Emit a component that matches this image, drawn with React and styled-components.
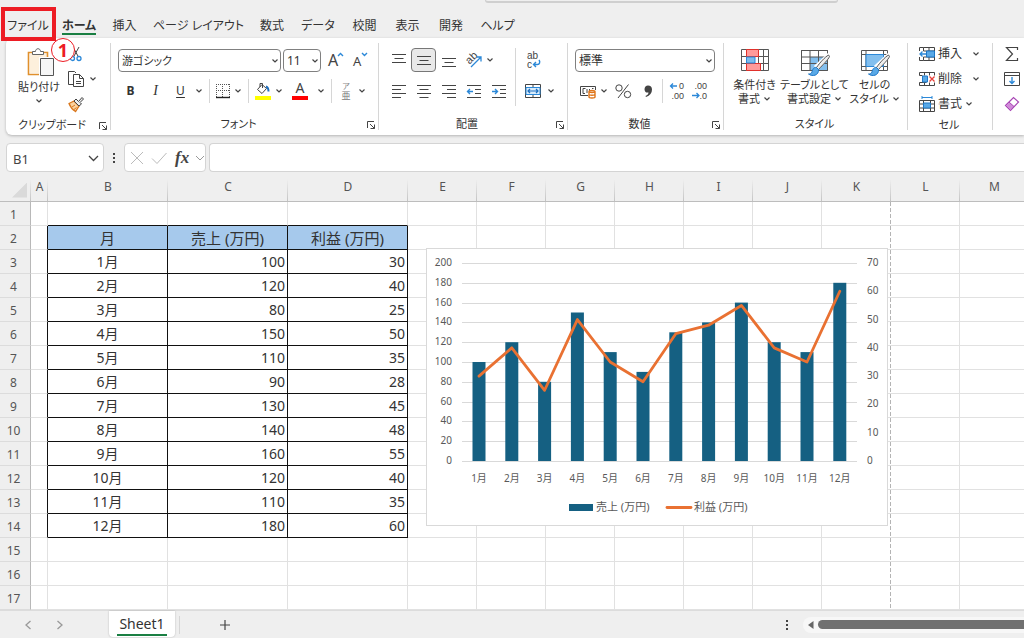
import React from "react";
import styled, { createGlobalStyle, css } from "styled-components";

const ui = `"Noto Sans", "Noto Sans CJK JP", sans-serif`;

const GlobalStyle = createGlobalStyle`
  *, *::before, *::after { box-sizing: border-box; }
  body { margin: 0; background: #efefef; color: #333; font-family: ${ui}; overflow-x: hidden; }
  button, input, select { font: inherit; color: inherit; }
`;

/* ---------- frame ---------- */

const Page = styled.div`
  display: flex;
  flex-direction: column;
  min-height: 100vh;
  overflow: hidden;
`;

const TopStrip = styled.header`
  position: relative;
  height: 38px;
  display: flex;
  flex-direction: column;
  justify-content: space-between;
`;

const SearchEdge = styled.div`
  width: 353px;
  height: 3px;
  margin-left: 485px;
  border: 1px solid #cfcfcf;
  border-width: 0 1px 2px;
  border-radius: 0 0 4px 4px;
`;

const Tabs = styled.nav`
  display: flex;
  padding: 0 0 2px 3px;
`;

const Tab = styled.button`
  flex: none;
  display: flex;
  justify-content: center;
  width: ${(p) => p.$w}px;
  height: 22px;
  padding: 0;
  border: 0;
  background: none;
  white-space: nowrap;
  font-size: 12px;
  line-height: 24px;
  font-feature-settings: "palt";
  font-weight: ${(p) => (p.$active ? 700 : 400)};

  span { height: 21px; border-bottom: 2px solid ${(p) => (p.$active ? "#1a7f43" : "transparent")}; }
`;

const FileMark = styled.div`
  position: absolute;
  z-index: 2;
  left: 1px;
  top: 7px;
  width: 55px;
  height: 34px;
  border: 4px solid #ed1c24;
`;

const StepBadge = styled.div`
  position: absolute;
  z-index: 2;
  left: 51px;
  top: 38px;
  width: 24px;
  height: 24px;
  border: 1px solid #ed1c24;
  border-radius: 50%;
  background: #fff;
  color: #ed1c24;
  font-weight: 700;
  font-size: 18px;
  line-height: 22px;
  text-align: center;
`;

/* ---------- ribbon ---------- */

const Ribbon = styled.section`
  display: flex;
  height: 97px;
  margin-left: 6px;
  background: #fff;
  border-radius: 6px 0 0 6px;
  box-shadow: 0 1px 3px rgba(0, 0, 0, 0.25);
`;

const GroupLine = styled.div`
  flex: none;
  width: 1px;
  margin: 5px 0;
  background: #d6d6d6;
`;

const Group = styled.div`
  flex: none;
  display: flex;
  flex-direction: column;
  width: ${(p) => p.$w}px;
`;

const GroupBody = styled.div`
  flex: 1;
  display: flex;
  padding: ${(p) => p.$pad || "10px 0 0 6px"};
`;

const GroupFoot = styled.div`
  display: flex;
  align-items: center;
  height: 20px;
  padding-right: 2px;
  font-size: 11px;
  line-height: 18px;
  text-align: center;
  white-space: nowrap;
  font-feature-settings: "palt";

  span { flex: 1; height: 20px; }
`;

const Stack = styled.div`
  flex: none;
  display: flex;
  flex-direction: column;
  gap: ${(p) => p.$gap || 0}px;
`;

const Row = styled.div`
  display: flex;
  align-items: center;
  height: ${(p) => p.$h || 24}px;
`;

const Tool = styled.button`
  flex: none;
  display: flex;
  align-items: center;
  justify-content: center;
  width: ${(p) => p.$w || 25}px;
  height: 24px;
  padding: 0;
  border: 0;
  background: none;
  font-size: 12px;
  line-height: 20px;
  ${(p) => p.$bold && css`font-weight: 700;`}
  ${(p) => p.$italic && css`font-family: "Liberation Serif", serif; font-style: italic; font-size: 14px;`}
  ${(p) => p.$underline && css`text-decoration: underline; text-underline-offset: 2px;`}
  ${(p) => p.$on && css`border: 1px solid #777; border-radius: 4px; background: #e9e9e9;`}
`;

const Sep = styled.span`
  flex: none;
  width: 1px;
  height: ${(p) => p.$h || 24}px;
  margin: 0 4px;
  background: #d6d6d6;
`;

const BigTool = styled.button`
  flex: none;
  display: flex;
  flex-direction: column;
  align-items: center;
  width: ${(p) => p.$w}px;
  padding: 0;
  border: 0;
  background: none;
  font-size: 11px;
  line-height: 14px;
  white-space: nowrap;
  font-feature-settings: "palt";

  > svg { margin-bottom: ${(p) => p.$iconGap || 2}px; }
  > span + svg { margin-top: 3px; }
`;

const WithChevron = styled.span`
  display: flex;
  align-items: center;
  gap: 3px;
`;

const CellTool = styled.button`
  display: flex;
  align-items: center;
  gap: 3px;
  height: 25px;
  padding: 0;
  border: 0;
  background: none;
  font-size: 12px;
  line-height: 20px;
  white-space: nowrap;

  > svg:last-child { margin-left: ${(p) => (p.$far ? 5 : 0)}px; }
`;

const Pick = styled.label`
  position: relative;
  flex: none;
  display: block;
  width: ${(p) => p.$w}px;
  height: 23px;
  margin-right: 2px;

  select {
    appearance: none;
    display: block;
    width: 100%;
    height: 23px;
    padding: 0 14px 0 3px;
    border: 1px solid #808080;
    border-radius: 4px;
    background: #fff;
    font-size: ${(p) => p.$size || 12}px;
    font-feature-settings: "palt";
  }
  svg { position: absolute; right: 2px; top: 8px; pointer-events: none; }
`;

/* ---------- formula bar ---------- */

const FormulaBar = styled.section`
  display: flex;
  height: 29px;
  margin: 8px 0 0 6px;
`;

const Field = styled.div`
  flex: ${(p) => (p.$w ? "none" : "1")};
  display: flex;
  align-items: center;
  width: ${(p) => (p.$w ? p.$w + "px" : "auto")};
  border: 1px solid #d4d4d4;
  border-right-width: ${(p) => (p.$w ? "1px" : 0)};
  border-radius: ${(p) => (p.$w ? "4px" : "4px 0 0 4px")};
  background: #fff;

  input {
    flex: 1;
    min-width: 0;
    height: 24px;
    padding: 3px 6px 0;
    border: 0;
    background: none;
    outline: 0;
    font-size: 13px;
    color: #444;
  }
`;

const BarDots = styled.div`
  flex: none;
  display: flex;
  align-items: center;
  justify-content: center;
  width: 20px;
`;

/* ---------- sheet ---------- */

const SheetArea = styled.main`
  position: relative;
  overflow: hidden;
`;

const Grid = styled.table`
  width: 1029px;
  min-width: 100%;
  table-layout: fixed;
  border-collapse: separate;
  border-spacing: 0;
  background: #fff;
`;

const ColHead = styled.th`
  height: 30px;
  padding: 0;
  border-bottom: 1px solid #bdbdbd;
  background: linear-gradient(to bottom, transparent 25%, #c4c4c4) right / 1px 100% no-repeat #efefef;
  font-size: 12px;
  font-weight: 400;
  line-height: 16px;
  color: #555;
`;

const Corner = styled.button`
  display: block;
  width: 15px;
  height: 15px;
  margin: 7px 0 0 12px;
  padding: 0;
  border: 0;
  background: #dadada;
  clip-path: polygon(100% 0, 100% 100%, 0 100%);
`;

const RowHead = styled.th`
  height: 24px;
  padding: 2px 3px 0 0;
  border-right: 1px solid #b8b8b8;
  border-bottom: 1px solid #dcdcdc;
  background: #efefef;
  font-size: 12px;
  font-weight: 400;
  line-height: 18px;
  color: #555;
`;

const Cell = styled.td`
  height: 24px;
  padding: 0 2px;
  border: solid #e1e1e1;
  border-width: 0 1px 1px 0;
  font-size: 14px;
  line-height: 20px;
  color: #333;
  text-align: ${(p) => p.$align || "center"};
  ${(p) => p.$head && css`background: #a6c9ec; font-size: 15px;`}
  ${(p) => p.$inkRight && css`border-right-color: #111;`}
  ${(p) => p.$inkBottom && css`border-bottom-color: #111;`}
  ${(p) =>
    p.$pageBreak &&
    css`
      border-right: 0;
      background: repeating-linear-gradient(to bottom, #b4b4b4 0 4px, #fff 4px 6px) right / 1px 100% no-repeat;
    `}
`;

const ChartFrame = styled.figure`
  position: absolute;
  left: 426px;
  top: 76px;
  width: 462px;
  height: 278px;
  margin: 0;
  border: 1px solid #d9d9d9;
  background: #fff;

  svg { display: block; }
  text { font-family: ${ui}; font-size: 10px; fill: #595959; }
  .legend { font-size: 11px; }
`;

/* ---------- bottom bar ---------- */

const BottomBar = styled.footer`
  display: flex;
  align-items: center;
  height: 28px;
  border-top: 1px solid #dcdcdc;
`;

const NavButton = styled.button`
  flex: none;
  display: flex;
  align-items: center;
  justify-content: center;
  width: 32px;
  height: 24px;
  padding: 0;
  border: 0;
  background: none;
`;

const SheetTab = styled.button`
  flex: none;
  width: 66px;
  height: 26px;
  margin-left: 33px;
  align-self: flex-start;
  padding: 1px 8px 0;
  border: 0;
  border-radius: 0 0 4px 4px;
  background: #fff;
  box-shadow: 0 0 2px rgba(0, 0, 0, 0.25);
  font-size: 14px;
  line-height: 20px;

  span { display: block; height: 22px; border-bottom: 2px solid #1a7f43; }
`;

const ScrollTrack = styled.div`
  flex: 1;
  display: flex;
  align-items: center;
  gap: 4px;
  height: 16px;
  padding-left: 4px;
  border-radius: 8px 0 0 8px;
  background: #f7f7f7;
`;

const ScrollThumb = styled.div`
  flex: 1;
  height: 9px;
  border-radius: 5px 0 0 5px;
  background: #707070;
`;

const Fill = styled.div`
  flex: 0 1 ${(p) => p.$w}px;
`;

/* ---------- icons ---------- */

const Icon = styled.svg`
  flex: none;
  display: block;
  overflow: visible;
  fill: none;
  stroke: #444;
  stroke-width: 1;
  text { stroke: none; fill: #444; font-family: "Liberation Sans", "Noto Sans CJK JP", sans-serif; }
`;

const Svg = ({ w = 16, h = 16, children, ...rest }) => (
  <Icon width={w} height={h} viewBox={`0 0 ${w} ${h}`} aria-hidden="true" {...rest}>
    {children}
  </Icon>
);

const Chevron = ({ w = 12 }) => (
  <Svg w={w} h={8}>
    <path d={`M${w / 2 - 2.5} 2.5 L${w / 2} 5 L${w / 2 + 2.5} 2.5`} strokeWidth="1.2" />
  </Svg>
);

const Launcher = () => (
  <Svg w={10} h={10}>
    <path d="M1.500 8V1.500H8M4 4l4.500 4.500M8.500 4.500v4h-4" />
  </Svg>
);

const Dots = () => (
  <Svg w={4} h={12}>
    <path d="M1 1h2v2H1zM1 5h2v2H1zM1 9h2v2H1z" fill="#444" stroke="none" />
  </Svg>
);

const PasteIcon = () => (
  <Svg w={32} h={30}>
    <g transform="translate(4 0)">
      <path d="M7 5.500H1.500V27.500H12" stroke="#e0902c" strokeWidth="1.600" />
      <path d="M3 7H20V10H12V26H3z" fill="#fdf0dc" stroke="none" />
      <path d="M15 5.500H20.500V10" stroke="#e0902c" strokeWidth="1.600" />
      <path d="M5.500 7.500V4.500H8.500C8.500 .8 13.500 .8 13.500 4.500H16.500V7.500z" fill="#fff" stroke="#666" />
      <path d="M13.500 11.500H26.500V28.500H13.500z" fill="#f6f6f6" stroke="#555" />
    </g>
  </Svg>
);

const CutIcon = () => (
  <Svg>
    <path d="M5 1l5.500 10M11 1L5.500 11" />
    <circle cx="4.500" cy="12.500" r="2" stroke="#2b88d8" strokeWidth="1.300" />
    <circle cx="11" cy="12.500" r="2" stroke="#2b88d8" strokeWidth="1.300" />
  </Svg>
);

const CopyIcon = () => (
  <Svg>
    <path d="M5 13.500H.5V.5H6.500L8 2" />
    <path d="M5.500 3.500H11.500L15.500 7.500V15.500H5.500zM11.500 3.500V7.500H15.500M8 10.500h5M8 12.500h5" />
  </Svg>
);

const BrushIcon = () => (
  <Svg>
    <path d="M1 7.500L6 5l5 5-3.500 5.500C5 14 2.500 11.500 1 7.500z" fill="#fbd3a0" stroke="#d9771d" strokeWidth="1.300" />
    <path d="M4 11l3-2M6 13.500l2.500-2" stroke="#d9771d" />
    <path d="M6 5l2-2 2.500 2.500L14 1.500l1.500 1.500L12 6.500l1.500 1.500-2.500 2z" fill="#eee" />
  </Svg>
);

const GrowFont = ({ down }) => (
  <Svg w={18} h={18}>
    <text x="1" y="15" fontSize={down ? 13 : 16} style={{ fontFamily: "Noto Sans, sans-serif" }}>A</text>
    <path d={down ? "M10 2l2.500 2.500L15 2" : "M11 5l2.500-2.500L16 5"} stroke="#2b88d8" strokeWidth="1.400" />
  </Svg>
);

const BordersIcon = () => (
  <Svg>
    <path d="M1.500 1v13M7.500 1v13M14.500 1v13M1 1.500h14M1 7.500h14" strokeDasharray="1 1" stroke="#555" />
    <path d="M1 14.500h14" stroke="#222" strokeWidth="1.400" />
  </Svg>
);

const FillIcon = () => (
  <Svg w={18} h={18}>
    <path d="M8 2.500L3.500 7.500l4.500 4 4.500-5zM6 5V1.500h2.500V6" />
    <path d="M12 4.500c2 .5 2.500 2 2.500 5" stroke="#1e6fbf" strokeWidth="2" />
    <path d="M1 14h16v4H1z" fill="#ff0" stroke="none" />
  </Svg>
);

const FontColorIcon = () => (
  <Svg w={16} h={18}>
    <text x="8" y="11" fontSize="14" textAnchor="middle" style={{ fontFamily: "Noto Sans, sans-serif" }}>A</text>
    <path d="M0 14h16v4H0z" fill="#f00" stroke="none" />
  </Svg>
);

const RubyIcon = () => (
  <Svg w={12} h={18}>
    <text x="6" y="7" fontSize="8" textAnchor="middle" style={{ fill: "#888" }}>ア</text>
    <text x="6" y="17" fontSize="9" textAnchor="middle" style={{ fill: "#777" }}>亜</text>
  </Svg>
);

const LINES = {
  top: "M1 2.500h14M3.500 6.500h9M1 10.500h14",
  middle: "M1 4.500h14M3.500 8.500h9M1 12.500h14",
  bottom: "M1 6.500h14M3.500 10.500h9M1 14.500h14",
  left: "M1 2.500h14M1 6.500h9M1 10.500h14M1 14.500h9",
  center: "M1 2.500h14M3.500 6.500h9M1 10.500h14M3.500 14.500h9",
  right: "M1 2.500h14M6 6.500h9M1 10.500h14M6 14.500h9",
};

const LinesIcon = ({ kind }) => (
  <Svg>
    <path d={LINES[kind]} />
  </Svg>
);

const IndentIcon = ({ out }) => (
  <Svg>
    <path d="M1 2.500h14M9 6.500h6M9 10.500h6M1 14.500h14" />
    <path
      d={out ? "M7 8.500H1.500M4 6L1.500 8.500 4 11" : "M1 8.500H6.500M4 6l2.500 2.500L4 11"}
      stroke="#2b88d8"
      strokeWidth="1.400"
    />
  </Svg>
);

const OrientIcon = () => (
  <Svg w={18} h={18}>
    <text x="1" y="11" fontSize="11" transform="rotate(-45 6 8)">ab</text>
    <path d="M6 16L16 6M11.500 6H16v4.500" stroke="#2b88d8" strokeWidth="1.300" />
  </Svg>
);

const WrapIcon = () => (
  <Svg w={14} h={18}>
    <text x="1" y="8" fontSize="10">ab</text>
    <text x="1" y="17" fontSize="10">c</text>
    <path d="M13 9c1.500 2 .5 4.500-1.500 4.500H8M10 11l-2.500 2.500L10 16" stroke="#2b88d8" strokeWidth="1.400" />
  </Svg>
);

const MergeIcon = () => (
  <Svg>
    <path d="M.5 1.500h15v13H.5zM.5 4.500h15M.5 11.500h15M8 1.500v3M8 11.500v3" />
    <path d="M1 4.500h14v7H1z" fill="#d9ecfb" stroke="#2b88d8" />
    <path d="M3 8h10M5 6L3 8l2 2M11 6l2 2-2 2" stroke="#1e6fbf" strokeWidth="1.200" />
  </Svg>
);

const CurrencyIcon = () => (
  <Svg>
    <path d="M8 12.500H.5v-9h15V7M5.500 5.500H3v5h2M7 6v4M9.500 6v2M12 5.500h1.500" />
    <path d="M9 8.500c0-1.300 6-1.300 6 0v5.500c0 1.300-6 1.300-6 0zM9 8.500c0 1.300 6 1.300 6 0M9 11.300c0 1.300 6 1.300 6 0" fill="#fff" stroke="#e0761a" strokeWidth="1.400" />
  </Svg>
);

const PercentIcon = () => (
  <Svg>
    <circle cx="4" cy="5" r="3.200" />
    <circle cx="12.500" cy="11.500" r="3.200" />
    <path d="M13.500 1.500L3 15" />
  </Svg>
);

const CommaIcon = () => (
  <Svg w={10} h={16}>
    <path d="M5 2.500c2.500 0 4 1.500 4 4 0 3.500-2 6-6 7.500l-.5-1c2-1 3-2 3-3.500C3 10 1.500 8.500 1.500 6.200 1.500 4 3 2.500 5 2.500z" fill="#444" stroke="none" />
  </Svg>
);

const DecimalIcon = ({ more }) => (
  <Svg w={16} h={18}>
    <text x="15" y="7" fontSize="9" textAnchor="end">{more ? "0" : ".00"}</text>
    <text x="15" y="17" fontSize="9" textAnchor="end">{more ? ".00" : ".0"}</text>
    <path
      d={more ? "M8 4H1.500M4 1.500L1.500 4 4 6.500" : "M0 13.500h7M4.500 11L7 13.500 4.500 16"}
      stroke="#2b88d8"
      strokeWidth="1.300"
    />
  </Svg>
);

const CondIcon = () => (
  <Svg w={28} h={22}>
    <path d="M.5 .5h27v21H.5zM.5 7.500h27M.5 14.500h27M5.500 .5v21M17.500 .5v21M22.500 .5v21" stroke="#555" fill="#fff" />
    <path d="M5.500 .5h12v7h-12zM5.500 14.500h14v7h-14z" fill="#ff9a9a" stroke="#e0312b" />
    <path d="M5.500 8h8.500v6H5.500z" fill="#7cbcec" stroke="#2b88d8" />
  </Svg>
);

const PaintBrush = () => (
  <>
    <path d="M29.500 6.500L18 19l-2-2L28 6z" fill="#fff" stroke="#fff" strokeWidth="3" />
    <path d="M28.500 6C25 8 20 13.500 16.500 18.500l2 2C22.500 16 28.500 10.500 29.500 7.500z" fill="#eee" stroke="#555" />
    <path d="M16.500 18.500c-3-.5-4 2-4.500 4.500-.5 1.500-2 2-3.500 2 4 3 10.500 1.500 10-4.500z" fill="#5aa9e6" stroke="#1e78c8" />
  </>
);

const TableStyleIcon = () => (
  <Svg w={30} h={27}>
    <path d="M1.500 1.500h26v20h-26z" fill="#fff" />
    <path d="M10 8h17.500v13.500H10z" fill="#83bfee" stroke="none" />
    <path d="M1.500 1.500h26v20h-26zM1.500 8h26M1.500 14.500h26M10 1.500v20M18.500 1.500v20" stroke="#555" />
    <PaintBrush />
  </Svg>
);

const CellStyleIcon = () => (
  <Svg w={30} h={27}>
    <path d="M1.500 1.500h26v20h-26zM1.500 5.500h26M1.500 17.500h26M6 1.500v20M23.500 1.500v20" stroke="#555" fill="#fff" />
    <path d="M6 5.500h17.500v12H6z" fill="#83bfee" stroke="#2b88d8" />
    <PaintBrush />
  </Svg>
);

const InsertIcon = () => (
  <Svg>
    <path d="M4.500 5V1.500h11v13h-11V11M.5 5V1.500h4M.5 11v3.500h4M4.500 5h11M4.500 11h11M10 1.500v13" />
    <path d="M7.500 5h8v6h-8z" fill="#5aa9e6" stroke="#1e78c8" />
    <path d="M7 8H1M3.500 5.500L1 8l2.500 2.500" stroke="#2b88d8" strokeWidth="1.300" />
  </Svg>
);

const DeleteIcon = () => (
  <Svg>
    <path d="M.5 4.500v-3h15v3M.5 11.500v3h15v-3M5.500 1.500v3M10.500 1.500v3M5.500 11.500v3M10.500 11.500v3M.5 4.500h3M.5 11.500h7" />
    <path d="M3.500 5h5v6h-5z" fill="#5aa9e6" stroke="#1e78c8" />
    <path d="M10.500 5.500l5 5M15.500 5.500l-5 5" stroke="#e8403a" strokeWidth="1.300" />
  </Svg>
);

const FormatIcon = () => (
  <Svg>
    <path d="M.5 4.500h15v11H.5zM.5 8h15M.5 12h15M4.500 4.500v11M11.500 4.500v11" />
    <path d="M4.500 7h7v5h-7z" fill="#5aa9e6" stroke="#1e78c8" />
    <path d="M3 1.500h10M3 0v3M13 0v3" stroke="#2b88d8" />
  </Svg>
);

const SumIcon = () => (
  <Svg>
    <path d="M13.500 4V1.500H2.500L8.500 8l-6 6.500h11V12" strokeWidth="1.200" />
  </Svg>
);

const FillDownIcon = () => (
  <Svg>
    <path d="M.5 1.500h15v13H.5zM.5 4.500h15" />
    <path d="M8 6v6.500M5.500 10L8 12.500l2.500-2.500" stroke="#2b88d8" strokeWidth="1.400" />
  </Svg>
);

const EraserIcon = () => (
  <Svg>
    <path d="M1.500 9.500L9.500 1.500l5 4.500-8 8.500z" stroke="#a846b5" fill="#fff" strokeWidth="1.200" />
    <path d="M1.500 9.500L5 6l5 4.500-3.500 4z" fill="#d08bd8" stroke="#a846b5" />
  </Svg>
);

/* ---------- data ---------- */

const TABS = [
  ["ファイル", 50], ["ホーム", 52], ["挿入", 39], ["ページ レイアウト", 109], ["数式", 38],
  ["データ", 54], ["校閲", 39], ["表示", 47], ["開発", 40], ["ヘルプ", 53],
];

const DATA = [
  [100, 30], [120, 40], [80, 25], [150, 50], [110, 35], [90, 28],
  [130, 45], [140, 48], [160, 55], [120, 40], [110, 35], [180, 60],
].map(([sales, profit], i) => ({ month: `${i + 1}月`, sales, profit }));

const COLUMNS = "ABCDEFGHIJKLM".split("");
const COL_WIDTHS = { A: 17, B: 120, C: 120, D: 120 };
const HEADINGS = { B: "月", C: "売上 (万円)", D: "利益 (万円)" };

const cellText = (col, row) => {
  if (row === 2) return HEADINGS[col] || "";
  const item = DATA[row - 3];
  if (!item) return "";
  return { B: item.month, C: item.sales, D: item.profit }[col] ?? "";
};

/* ---------- parts ---------- */

const RibbonGroup = ({ w, label, launcher, pad, children }) => (
  <>
    <Group $w={w}>
      <GroupBody $pad={pad}>{children}</GroupBody>
      <GroupFoot>
        <span>{label}</span>
        {launcher && <Launcher />}
      </GroupFoot>
    </Group>
    <GroupLine />
  </>
);

const Choice = ({ label, value, w, size }) => (
  <Pick $w={w} $size={size}>
    <select aria-label={label} defaultValue={value}>
      <option>{value}</option>
    </select>
    <Chevron w={8} />
  </Pick>
);

const Chart = () => {
  const x = (i) => 52 + i * 32.8;
  const ySales = (v) => 212 - (v * 198) / 200;
  const yProfit = (v) => 212 - (v * 198) / 70;
  const left = Array.from({ length: 11 }, (_, i) => i * 20);
  const right = Array.from({ length: 8 }, (_, i) => i * 10);
  return (
    <ChartFrame>
      <svg width="460" height="276" viewBox="0 0 460 276" role="img" aria-label="売上と利益">
        {left.map((v) => (
          <g key={v}>
            <line x1="35" x2="430" y1={Math.round(ySales(v)) + 0.5} y2={Math.round(ySales(v)) + 0.5} stroke="#d9d9d9" />
            <text x="25" y={ySales(v) + 3} textAnchor="end">{v}</text>
          </g>
        ))}
        {right.map((v) => (
          <text key={v} x="440" y={yProfit(v) + 3}>{v}</text>
        ))}
        {DATA.map((d, i) => (
          <g key={d.month}>
            <rect x={x(i) - 6.5} y={ySales(d.sales)} width="13" height={212 - ySales(d.sales)} fill="#156082" />
            <text x={x(i)} y="233" textAnchor="middle">{d.month}</text>
          </g>
        ))}
        <polyline
          points={DATA.map((d, i) => `${x(i)},${yProfit(d.profit)}`).join(" ")}
          fill="none"
          stroke="#e97132"
          strokeWidth="2.800"
          strokeLinecap="round"
          strokeLinejoin="round"
        />
        <rect x="142" y="255" width="24" height="7" fill="#156082" />
        <text className="legend" x="169" y="262">売上 (万円)</text>
        <line x1="240" x2="264" y1="258.500" y2="258.500" stroke="#e97132" strokeWidth="2.800" strokeLinecap="round" />
        <text className="legend" x="267" y="262">利益 (万円)</text>
      </svg>
    </ChartFrame>
  );
};

const Sheet = () => (
  <SheetArea>
    <Grid>
      <colgroup>
        <col style={{ width: 31 }} />
        {COLUMNS.map((c) => (
          <col key={c} style={{ width: COL_WIDTHS[c] || 69 }} />
        ))}
      </colgroup>
      <thead>
        <tr>
          <ColHead><Corner aria-label="すべて選択" /></ColHead>
          {COLUMNS.map((c) => <ColHead key={c} scope="col">{c}</ColHead>)}
        </tr>
      </thead>
      <tbody>
        {Array.from({ length: 17 }, (_, i) => i + 1).map((row) => {
          const inRows = row >= 2 && row <= 14;
          return (
            <tr key={row}>
              <RowHead scope="row">{row}</RowHead>
              {COLUMNS.map((c) => {
                const inTable = "BCD".includes(c);
                return (
                  <Cell
                    key={c}
                    $head={row === 2 && inTable}
                    $align={row > 2 && (c === "C" || c === "D") ? "right" : "center"}
                    $inkRight={inRows && (inTable || c === "A")}
                    $inkBottom={inTable && (inRows || row === 1)}
                    $pageBreak={c === "K"}
                  >
                    {cellText(c, row)}
                  </Cell>
                );
              })}
            </tr>
          );
        })}
      </tbody>
    </Grid>
    <Chart />
  </SheetArea>
);

export default function App() {
  return (
    <Page>
      <GlobalStyle />
      <TopStrip>
        <SearchEdge />
        <Tabs>
          {TABS.map(([name, w]) => (
            <Tab key={name} $w={w} $active={name === "ホーム"}><span>{name}</span></Tab>
          ))}
        </Tabs>
        <FileMark />
        <StepBadge>1</StepBadge>
      </TopStrip>

      <Ribbon>
        <RibbonGroup w={104} label="クリップボード" launcher pad="3px 0 0 6px">
          <BigTool $w={54} $iconGap={3}>
            <Row $h={6} />
            <PasteIcon />
            <span>貼り付け</span>
            <Chevron />
          </BigTool>
          <Stack>
            <Row $h={25}><Tool $w={20} aria-label="切り取り"><CutIcon /></Tool></Row>
            <Row $h={25}>
              <Tool $w={20} aria-label="コピー"><CopyIcon /></Tool>
              <Tool $w={14} aria-label="コピーのオプション"><Chevron /></Tool>
            </Row>
            <Row $h={25}><Tool $w={20} aria-label="書式のコピー"><BrushIcon /></Tool></Row>
          </Stack>
        </RibbonGroup>

        <RibbonGroup w={267} label="フォント" launcher pad="10px 0 0 7px">
          <Stack $gap={7}>
            <Row>
              <Choice label="フォント名" value="游ゴシック" w={163} size={11} />
              <Choice label="フォント サイズ" value="11" w={38} />
              <Tool aria-label="拡大"><GrowFont /></Tool>
              <Tool aria-label="縮小"><GrowFont down /></Tool>
            </Row>
            <Row>
              <Tool $bold>B</Tool>
              <Tool $italic>I</Tool>
              <Tool $underline>U</Tool>
              <Chevron />
              <Sep />
              <Tool $w={18} aria-label="罫線"><BordersIcon /></Tool>
              <Chevron />
              <Sep />
              <Tool $w={20} aria-label="塗りつぶし"><FillIcon /></Tool>
              <Chevron />
              <Tool $w={30} aria-label="文字色"><FontColorIcon /></Tool>
              <Chevron />
              <Sep />
              <Tool $w={20} aria-label="ふりがな"><RubyIcon /></Tool>
              <Chevron />
            </Row>
          </Stack>
        </RibbonGroup>

        <RibbonGroup w={188} label="配置" launcher pad="10px 0 0 7px">
          <Stack $gap={7}>
            <Row>
              <Tool aria-label="上揃え"><LinesIcon kind="top" /></Tool>
              <Tool $on aria-label="上下中央揃え"><LinesIcon kind="middle" /></Tool>
              <Tool aria-label="下揃え"><LinesIcon kind="bottom" /></Tool>
              <Tool aria-label="方向"><OrientIcon /></Tool>
              <Chevron w={8} />
            </Row>
            <Row>
              <Tool aria-label="左揃え"><LinesIcon kind="left" /></Tool>
              <Tool aria-label="中央揃え"><LinesIcon kind="center" /></Tool>
              <Tool aria-label="右揃え"><LinesIcon kind="right" /></Tool>
              <Tool aria-label="インデントを減らす"><IndentIcon out /></Tool>
              <Tool aria-label="インデントを増やす"><IndentIcon /></Tool>
            </Row>
          </Stack>
          <Sep $h={58} />
          <Stack $gap={7}>
            <Row><Tool aria-label="折り返し"><WrapIcon /></Tool></Row>
            <Row><Tool aria-label="結合"><MergeIcon /></Tool><Chevron /></Row>
          </Stack>
        </RibbonGroup>

        <RibbonGroup w={155} label="数値" launcher pad="10px 0 0 7px">
          <Stack $gap={7}>
            <Row><Choice label="表示形式" value="標準" w={140} /></Row>
            <Row>
              <Tool aria-label="通貨"><CurrencyIcon /></Tool>
              <Chevron w={8} />
              <Tool $w={30} aria-label="パーセント"><PercentIcon /></Tool>
              <Tool $w={20} aria-label="桁区切り"><CommaIcon /></Tool>
              <Sep />
              <Tool $w={20} aria-label="小数点以下を増やす"><DecimalIcon more /></Tool>
              <Tool aria-label="小数点以下を減らす"><DecimalIcon /></Tool>
            </Row>
          </Stack>
        </RibbonGroup>

        <RibbonGroup w={183} label="スタイル" pad="10px 0 0 4px">
          <BigTool $w={53} $iconGap={7}>
            <Row $h={1} />
            <CondIcon />
            <span>条件付き</span>
            <WithChevron>書式<Chevron w={8} /></WithChevron>
          </BigTool>
          <BigTool $w={67}>
            <Row $h={1} />
            <TableStyleIcon />
            <span>テーブルとして</span>
            <WithChevron>書式設定<Chevron w={8} /></WithChevron>
          </BigTool>
          <BigTool $w={53}>
            <Row $h={1} />
            <CellStyleIcon />
            <span>セルの</span>
            <WithChevron>スタイル<Chevron w={8} /></WithChevron>
          </BigTool>
        </RibbonGroup>

        <RibbonGroup w={84} label="セル" pad="3px 0 0 11px">
          <Stack>
            <CellTool $far><InsertIcon />挿入<Chevron /></CellTool>
            <CellTool $far><DeleteIcon />削除<Chevron /></CellTool>
            <CellTool><FormatIcon />書式<Chevron w={8} /></CellTool>
          </Stack>
        </RibbonGroup>

        <GroupBody $pad="3px 0 0 11px">
          <Stack>
            <CellTool aria-label="合計"><SumIcon /></CellTool>
            <CellTool aria-label="フィル"><FillDownIcon /></CellTool>
            <CellTool aria-label="クリア"><EraserIcon /></CellTool>
          </Stack>
        </GroupBody>
      </Ribbon>

      <FormulaBar>
        <Field $w={98}>
          <input aria-label="名前ボックス" defaultValue="B1" />
          <Svg w={18} h={10}><path d="M4 3l4.500 4.500L13 3" strokeWidth="1.300" /></Svg>
        </Field>
        <BarDots><Dots /></BarDots>
        <Field $w={82}>
          <Tool $w={24} aria-label="キャンセル"><Svg><path d="M2 2l12 12M14 2L2 14" stroke="#bbb" /></Svg></Tool>
          <Tool $w={20} aria-label="入力"><Svg><path d="M1 8.500l5 5L15.500 3" stroke="#bbb" /></Svg></Tool>
          <Tool $w={26} aria-label="関数の挿入">
            <Svg w={18} h={18}>
              <text x="2" y="14" fontSize="17" fontWeight="700" fontStyle="italic" style={{ fontFamily: "Liberation Serif, serif" }}>fx</text>
            </Svg>
          </Tool>
          <Svg w={10} h={10}><path d="M1 3l4 4 4-4" stroke="#999" /></Svg>
        </Field>
        <Fill $w={3} />
        <Field><input aria-label="数式バー" /></Field>
      </FormulaBar>

      <Sheet />

      <BottomBar>
        <Fill $w={12} />
        <NavButton aria-label="前のシート"><Svg w={8} h={10}><path d="M6.500 1L2 5l4.500 4" stroke="#999" strokeWidth="1.300" /></Svg></NavButton>
        <NavButton aria-label="次のシート"><Svg w={8} h={10}><path d="M1.500 1L6 5 1.500 9" stroke="#999" strokeWidth="1.300" /></Svg></NavButton>
        <SheetTab><span>Sheet1</span></SheetTab>
        <Sep $h={18} />
        <Fill $w={25} />
        <NavButton aria-label="新しいシート"><Svg w={12} h={12}><path d="M6 1v10M1 6h10" strokeWidth="1.200" /></Svg></NavButton>
        <Fill $w={544} />
        <Dots />
        <Fill $w={14} />
        <ScrollTrack>
          <Svg w={7} h={10}><path d="M6.500 1v8L1 5z" fill="#666" stroke="none" /></Svg>
          <ScrollThumb />
        </ScrollTrack>
      </BottomBar>
    </Page>
  );
}
